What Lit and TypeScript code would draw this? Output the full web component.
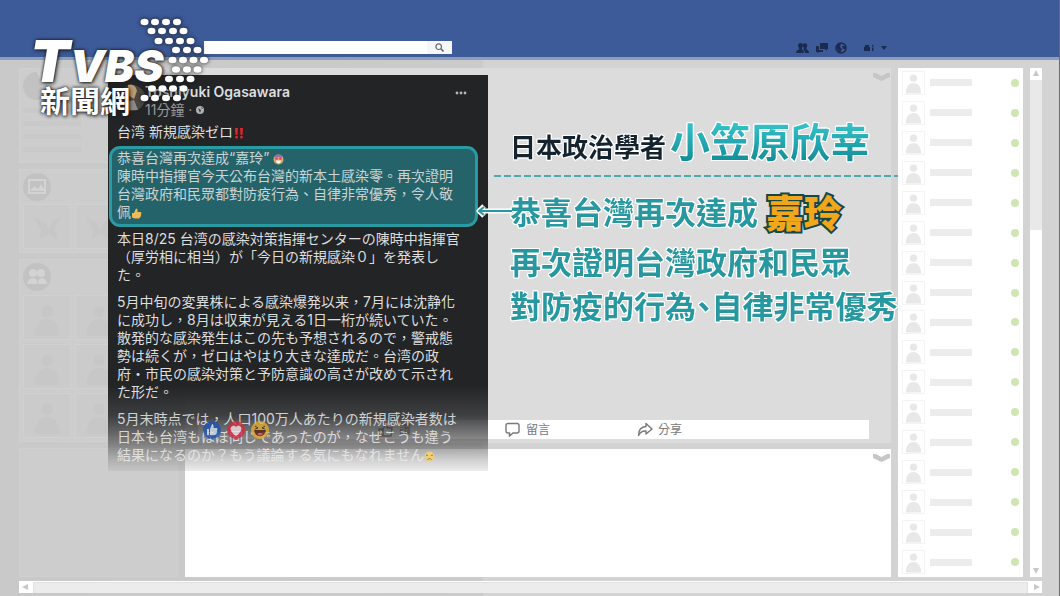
import { LitElement, html, css, svg } from "lit";
import { customElement } from "lit/decorators.js";

const chevron = html`<svg class="chevron" viewBox="0 0 17 8" aria-hidden="true">
  <path d="M0 0 L3 0 L8.5 3 L14 0 L17 0 L17 4 L8.5 8 L0 4Z" fill="currentColor" />
</svg>`;

const person = html`<svg class="person" viewBox="0 0 22 22" aria-hidden="true">
  <circle cx="11" cy="6" r="3.8" fill="currentColor" />
  <path d="M3 22 C3 14 7 11 11 11 S19 14 19 22Z" fill="currentColor" />
</svg>`;

@customElement("broadcast-logo")
class BroadcastLogo extends LitElement {
  static styles = css`
    :host { display: block; position: relative; width: 180px; color: #fff; }
    .word {
      display: flex; align-items: baseline; height: 64px; line-height: 88px;
      font-family: Inter, "Liberation Sans", sans-serif; font-weight: 900; font-style: italic;
      text-shadow: 0 0 3px #111, 1px 1px 4px #222;
    }
    .big { font-size: 58px; }
    .small { font-size: 44px; }
    .sub {
      padding-left: 10px; font: 700 30px/36px "Noto Sans CJK TC", sans-serif;
      text-shadow: 0 0 3px #111, 1px 1px 4px #222;
    }
    .dots { position: absolute; left: 105px; top: 0; width: 80px; height: 90px; overflow: visible; filter: drop-shadow(0 0 2px #111); }
  `;
  render() {
    const rows: [number, number[]][] = [
      [22, [144.5, 155, 166, 177]],
      [31, [151.5, 162, 173, 183.5]],
      [41, [158.5, 169, 180, 190.5]],
      [50, [176, 187, 197.5]],
      [60, [172.5, 183, 193.5, 204]],
      [69.5, [176, 187, 197.5]],
      [79, [169, 180, 190.5]],
      [88.5, [152, 162.5, 173, 183.5]],
      [98, [144.5, 155, 166, 177]],
    ];
    return html`
      <div class="word"><span class="big">T</span><span class="small">VBS</span></div>
      <div class="sub">新聞網</div>
      <svg class="dots" viewBox="135 17 80 90" aria-hidden="true">
        ${rows.map(([y, xs]) => xs.map((x) => svg`<ellipse cx=${x} cy=${y} rx="4" ry="3.2" fill="#fff" />`))}
      </svg>`;
  }
}

@customElement("post-card")
class PostCard extends LitElement {
  static styles = css`
    :host {
      display: block; width: 380px; color: #dcdedf; white-space: nowrap;
      background: linear-gradient(#232426 0, #232426 310px, rgba(36, 37, 39, 0.86) 340px, rgba(60, 60, 62, 0.6) 365px, rgba(120, 120, 120, 0.35) 385px, rgba(160, 160, 160, 0.2));
      font: 400 14px/18px Inter, "Noto Sans CJK TC", sans-serif;
      padding-bottom: 7px;
    }
    .head { display: flex; padding: 8px 21px 0 11px; }
    .avatar { width: 26px; height: 30px; }
    .who { flex: 1; }
    .name { font: 600 14px/18px Inter, sans-serif; margin: 0; }
    .time { display: flex; align-items: center; gap: 4px; color: #96989b; }
    .globe { width: 8px; height: 8px; }
    .more { align-self: flex-start; border: 0; padding: 0; background: none; height: 20px; color: #b4b6b8; }
    .more svg { display: block; width: 12px; height: 4px; }
    p { margin: 0 9px 9px; }
    .lead { margin: 4px 9px 5px; }
    .quote {
      margin: 0 10px 3px 1px; padding: 0 5px 3px; border: 3px solid #2a9aa3; border-radius: 11px;
      background: #24636a; color: #c8d4d5;
    }
    .last { color: rgba(235, 235, 235, 0.86); margin-bottom: 0; }
    .emoji { width: 11px; height: 11px; vertical-align: -2px; }
  `;
  render() {
    return html`
      <header class="head">
        <svg class="avatar" viewBox="0 0 26 30" aria-hidden="true">
          <circle cx="13" cy="15" r="13" fill="#4b463f" /><path d="M9 2 Q16 0 18 8 L15 16 L9 12Z" fill="#b89b73" />
          <path d="M7 19 L15 17 L19 27 L10 27Z" fill="#8d8b88" />
        </svg>
        <div class="who">
          <h2 class="name">Toshiyuki Ogasawara</h2>
          <div class="time"><span>11分鐘 ·</span>
            <svg class="globe" viewBox="0 0 8 8" aria-hidden="true"><circle cx="4" cy="4" r="4" fill="#b0b2b4" /><path d="M2 2 L5 4 L4 7Z M5 1 L7 2 L6 3Z" fill="#3a3b3d" /></svg>
          </div>
        </div>
        <button class="more" aria-label="更多"><svg viewBox="0 0 12 4"><circle cx="2" cy="2" r="1.4" fill="currentColor" /><circle cx="6" cy="2" r="1.4" fill="currentColor" /><circle cx="10" cy="2" r="1.4" fill="currentColor" /></svg></button>
      </header>
      <p class="lead">台湾 新規感染ゼロ<svg class="emoji" viewBox="0 0 11 11" aria-label="‼"><path d="M2 0h3l-.6 7h-1.8z M7 0h3l-.6 7h-1.8z" fill="#e0262c" /><circle cx="3.5" cy="9.2" r="1.4" fill="#e0262c" /><circle cx="8.5" cy="9.2" r="1.4" fill="#e0262c" /></svg></p>
      <p class="quote">恭喜台灣再次達成“嘉玲” <svg class="emoji" viewBox="0 0 11 11" aria-hidden="true"><circle cx="5.5" cy="5.5" r="5" fill="#dba667" /><path d="M1 3 Q5.500 -2 10 3Z" fill="#9a6bb5" /><circle cx="3.500" cy="4.500" r="1.300" fill="#d6455c" /><circle cx="7.500" cy="4.500" r="1.300" fill="#d6455c" /><path d="M3 6.500h5q-.5 3-2.500 3t-2.500-3z" fill="#fff" /></svg><br />陳時中指揮官今天公布台灣的新本土感染零。再次證明<br />台灣政府和民眾都對防疫行為、自律非常優秀，令人敬<br />佩<svg class="emoji" viewBox="0 0 11 11" aria-hidden="true"><path d="M1 5h2L5 .5q2 0 1.500 3.500H10q1 1 0 2 .5 1-.3 2 0 1-.8 1.500-.3 1-1.200 1H4L1 9.500z" fill="#eebb58" /></svg></p>
      <p>本日8/25 台湾の感染対策指揮センターの陳時中指揮官<br />（厚労相に相当）が「今日の新規感染０」を発表し<br />た。</p>
      <p>5月中旬の変異株による感染爆発以来，7月には沈静化<br />に成功し，8月は収束が見える1日一桁が続いていた。<br />散発的な感染発生はこの先も予想されるので，警戒態<br />勢は続くが，ゼロはやはり大きな達成だ。台湾の政<br />府・市民の感染対策と予防意識の高さが改めて示され<br />た形だ。</p>
      <p class="last">5月末時点では，人口100万人あたりの新規感染者数は<br />日本も台湾もほぼ同じであったのが，なぜこうも違う<br />結果になるのか？もう議論する気にもなれません<svg class="emoji" viewBox="0 0 11 11" aria-hidden="true"><circle cx="5.500" cy="5.500" r="5" fill="#edcf76" /><path d="M2 4l2 .5M9 4l-2 .5M3.500 8.500q2-2 4 0" stroke="#a37a3d" fill="none" /></svg></p>`;
  }
}

@customElement("side-rail")
class SideRail extends LitElement {
  static styles = css`
    :host { display: flex; flex-direction: column; gap: 6px; color: #c2c2c2; }
    .box { background: #cdcdcd; border: 1px solid #d0d0d0; padding: 3px; box-sizing: border-box; }
    .info { height: 95px; }
    .badge { display: block; width: 28px; height: 28px; }
    .line { width: 58px; height: 5px; margin-top: 8px; background: #c9c9c9; }
    .tiles { display: grid; grid-template-columns: repeat(3, 48px); gap: 4px; overflow: hidden; }
    .tile { height: 45px; box-sizing: border-box; border: 1px solid #d1d1d1; background: #cbcbcb; color: #c7c7c7; padding: 3px 6px 0; }
    .tile svg { display: block; width: 100%; height: 100%; }
    .friends .badge { margin-bottom: 4px; }
    .rest { flex: 1; }
    .photos .badge { margin-bottom: 3px; }
  `;
  render() {
    const tiles = (n: number) => Array.from({ length: n }, () => html`<div class="tile">${person}</div>`);
    return html`
      <div class="box info">
        <svg class="badge" viewBox="0 0 28 28"><circle cx="14" cy="14" r="14" fill="currentColor" /><path d="M14 0 A14 14 0 0 1 28 14 L18 10Z" fill="#d2d2d2" /></svg>
        ${[1, 2, 3, 4].map(() => html`<div class="line"></div>`)}
      </div>
      <div class="box photos">
        <svg class="badge" viewBox="0 0 28 28"><circle cx="14" cy="14" r="14" fill="currentColor" /><rect x="6" y="7" width="16" height="13" fill="none" stroke="#d3d3d3" stroke-width="2" /><path d="M7 18l4-5 4 3 3-5 4 7z" fill="#d3d3d3" /></svg>
        <div class="tiles">${[1, 2, 3].map(() => html`<div class="tile"><svg viewBox="0 0 30 30"><path d="M3 5l10 5 3 6 4-7 8-4-6 10 2 11-7-6-9 5 2-8z" fill="currentColor" /></svg></div>`)}</div>
      </div>
      <div class="box friends">
        <svg class="badge" viewBox="0 0 28 28"><circle cx="14" cy="14" r="14" fill="currentColor" /><circle cx="10" cy="10" r="4" fill="#d3d3d3" /><circle cx="18" cy="10" r="4" fill="#d3d3d3" /><path d="M4 21q1-6 6-6t4 6zM15 21q0-6 4-6t5 6z" fill="#d3d3d3" /></svg>
        <div class="tiles">${tiles(9)}</div>
      </div>
      <div class="box rest"></div>`;
  }
}

@customElement("app-root")
class AppRoot extends LitElement {
  static styles = css`
    :host {
      display: flex; flex-direction: column; position: relative; min-height: 100vh; box-sizing: border-box; overflow: hidden;
      border-right: 1px solid #6c6c6c;
      background: linear-gradient(90deg, #c9c9c9 0, #cbcbcb 45.600%, #d3d3d3 45.600%);
      font-family: "Noto Sans CJK TC", sans-serif;
    }
    button { border: 0; padding: 0; background: none; color: inherit; display: block; }
    .topbar {
      display: flex; justify-content: space-between; align-items: center; box-sizing: border-box; height: 60px;
      padding: 38px 172px 0 204px; background: #3d5a99; border-bottom: 3px solid #8d9dbd;
    }
    .search { display: flex; width: 248px; height: 13px; background: #fff; }
    .search input { flex: 1; min-width: 0; border: 0; padding: 0 4px; background: none; font-size: 10px; outline: 0; }
    .search button { width: 25px; background: #f4f6fa; color: #666; }
    .search svg { display: block; width: 9px; height: 9px; margin: 0 auto; }
    .tools { display: flex; align-items: center; gap: 7px; color: #1a2a50; }
    .tools svg { display: block; height: 12px; }
    .tools .gap { margin-left: 10px; }
    .main { flex: 1; display: flex; padding: 8px 17px 4px 19px; gap: 7px; }
    .rail { width: 159px; flex: none; }
    .center { flex: 1; min-width: 0; display: flex; flex-direction: column; gap: 6px; }
    .panel { background: #dcdcdc; display: flex; flex-direction: column; height: 375px; }
    .chevron { display: block; width: 17px; height: 8px; align-self: flex-end; flex: none; margin-top: 5px; margin-right: 1px; color: #c6c6c6; }
    .blank { flex: 1; background: #fff; display: flex; flex-direction: column; }
    .story { flex: 1; padding: 25px 0 0 325px; white-space: nowrap; color: #2797a0; font-weight: 700; font-size: 31px; line-height: 44px; }
    .title { display: flex; align-items: baseline; margin: 0; height: 48px; line-height: 48px; }
    .role { font-size: 26px; color: #14232e; }
    .scholar {
      font-size: 40px; margin-left: 4px; color: transparent; background: linear-gradient(#35c3cb 20%, #148e98 85%);
      -webkit-background-clip: text; background-clip: text;
    }
    .halo { filter: drop-shadow(1px 0 #fff) drop-shadow(-1px 0 #fff) drop-shadow(0 1px #fff) drop-shadow(0 -1px #fff); }
    .rule { height: 2px; margin: 21px -7px 12px -16px; background: repeating-linear-gradient(90deg, #4fa9b0 0, #4fa9b0 7px, transparent 7px, transparent 10px); }
    .say { display: flex; margin: 0; height: 44px; }
    .say + .say { margin-top: 6px; }
    .say + .say + .say { margin-top: 0; }
    .half { font-feature-settings: "halt"; }
    .nick {
      font-size: 38px; font-weight: 900; color: #f2a71b; margin-left: 8px;
      -webkit-text-stroke: 4px #14474a; paint-order: stroke fill;
    }
    .actions { display: flex; align-items: center; box-sizing: border-box; height: 19px; margin: 0 22px 4px 13px; background: #fff; color: #77797d; }
    .reacts { display: flex; gap: 6px; width: 180px; padding-left: 5px; box-sizing: border-box; position: relative; z-index: 3; opacity: 0.8; }
    .reacts svg { width: 18px; height: 18px; }
    .act { display: flex; align-items: center; gap: 5px; font: 400 12px/18px "Liberation Serif", "Noto Sans CJK TC", serif; width: 127px; }
    .act.share { margin-left: 5px; }
    .act svg { width: 16px; height: 15px; }
    .contacts { width: 125px; box-sizing: border-box; flex: none; background: #fff; display: grid; grid-auto-rows: 1fr; margin: 0; padding: 0 4px; list-style: none; position: relative; }
    .contact { display: flex; align-items: center; }
    .pic { width: 21px; height: 22px; border: 1px solid #f4f4f4; color: #e8e8e8; }
    .pic svg { display: block; width: 21px; height: 22px; }
    .bar { width: 42px; height: 7px; margin-left: 5px; background: #ececec; }
    .dot { width: 8px; height: 8px; border-radius: 50%; background: #cfe6b4; margin-left: auto; }
    .vscroll { width: 12px; flex: none; background: #fff; display: flex; flex-direction: column; color: #c8c8c8; }
    .vscroll svg, .hscroll svg { display: block; width: 12px; height: 12px; }
    .vthumb { height: 150px; background: #e9e9e9; }
    .vfill { flex: 1; }
    .hscroll { display: flex; margin: 0 17px 3px 19px; background: #fff; color: #c8c8c8; height: 12px; }
    .hthumb { flex: 1; margin: 1px 2px 0; border: 1px solid #e0e0e0; border-bottom: 0; background: #ececec; }
    .post { position: absolute; left: 108px; top: 75px; z-index: 2; }
    .logo { position: absolute; left: 30px; top: 17px; z-index: 4; }
    .arrow { position: absolute; left: 476px; top: 203px; width: 36px; height: 16px; z-index: 4; }
  `;
  render() {
    return html`
      <header class="topbar">
        <form class="search" role="search">
          <input type="text" aria-label="搜尋" />
          <button type="button" aria-label="搜尋"><svg viewBox="0 0 9 9"><circle cx="3.700" cy="3.700" r="2.800" fill="none" stroke="currentColor" stroke-width="1.200" /><path d="M5.800 5.800L8.500 8.500" stroke="currentColor" stroke-width="1.600" /></svg></button>
        </form>
        <nav class="tools">
          <button aria-label="朋友"><svg width="13" viewBox="0 0 13 12"><circle cx="4.500" cy="3.500" r="2.500" fill="currentColor" /><circle cx="9" cy="3.500" r="2.300" fill="currentColor" /><path d="M0 11q0-3 3-3.500V5h3v2.500q2 .5 2 3.500zM8 5h2.500v2.500Q13 8 13 11H9q0-2-1.500-3z" fill="currentColor" /></svg></button>
          <button aria-label="訊息"><svg width="12" viewBox="0 0 12 12"><path d="M4 1h8v6h-1v2L9 7H4z M0 4h3v4h4v2H3L1.500 11.500V10H0z" fill="currentColor" /></svg></button>
          <button aria-label="通知"><svg width="12" viewBox="0 0 12 12"><circle cx="6" cy="6" r="5" fill="none" stroke="currentColor" stroke-width="1.500" /><path d="M2 2l4-1-1 4 2 2-2 4-3-4zM7 4l3 0 0 3-2 0z" fill="currentColor" /></svg></button>
          <button class="gap" aria-label="隱私"><svg width="10" viewBox="0 0 10 12"><path d="M0 5h6v4H0z M1 5V3h4v2z M8 3h1.500v1.500H8z M8 5.500h1.500V9H8z" fill="currentColor" /></svg></button>
          <button aria-label="選單"><svg width="6" viewBox="0 0 6 12"><path d="M0 4h6L3 8z" fill="currentColor" /></svg></button>
        </nav>
      </header>
      <main class="main">
        <side-rail class="rail"></side-rail>
        <div class="center">
          <section class="panel">
            ${chevron}
            <div class="story">
              <h1 class="title"><span class="role halo">日本政治學者</span><span class="halo"><span class="scholar">小笠原欣幸</span></span></h1>
              <div class="rule"></div>
              <p class="say"><span class="halo">恭喜台灣再次達成</span><span class="nick">嘉玲</span></p>
              <p class="say"><span class="halo">再次證明台灣政府和民眾</span></p>
              <p class="say"><span class="halo">對防疫的行為<span class="half">、</span>自律非常優秀</span></p>
            </div>
            <div class="actions">
              <div class="reacts">
                <svg viewBox="0 0 18 18"><circle cx="9" cy="9" r="9" fill="#1d55b5" /><path d="M4 8h2v6H4zM7 8l2-5q2 0 1.500 4H14q1 1 0 2.500 0 4-2 4.500H7z" fill="#d5deee" /></svg>
                <svg viewBox="0 0 18 18"><circle cx="9" cy="9" r="9" fill="#d32a42" /><path d="M9 15Q2 10 4 6q3-3 5 0 2-3 5 0 2 4-5 9z" fill="#f1dfe2" /></svg>
                <svg viewBox="0 0 18 18"><circle cx="9" cy="9" r="9" fill="#e0ad35" /><path d="M4 5l3 2-3 1M14 5l-3 2 3 1" stroke="#46320c" fill="none" /><path d="M3 9h12q-1 6-6 6T3 9z" fill="#59220e" /><path d="M6 13q3-2 6 0-3 3-6 0z" fill="#e84a54" /></svg>
              </div>
              <button class="act"><svg viewBox="0 0 16 15"><path d="M1 14V7h3v7zM5 7l3-5q2 0 1 4h5l-1 8H5z" fill="none" stroke="currentColor" stroke-width="1.300" /></svg>讚</button>
              <button class="act"><svg viewBox="0 0 16 15"><path d="M3 1.500h9q2 0 2 2V9q0 2-2 2H8l-3.500 3V11H3q-2 0-2-2V3.500q0-2 2-2z" fill="none" stroke="currentColor" stroke-width="1.400" /></svg>留言</button>
              <button class="act share"><svg viewBox="0 0 16 15"><path d="M1.500 13.500Q1.500 5 9 4.500V1.500L15 7l-6 5V9Q4 8.500 1.500 13.500z" fill="none" stroke="currentColor" stroke-width="1.400" stroke-linejoin="round" /></svg>分享</button>
            </div>
          </section>
          <section class="blank">${chevron}</section>
        </div>
        <ul class="contacts">
          ${Array.from({ length: 17 }, () => html`<li class="contact"><span class="pic">${person}</span><span class="bar"></span><span class="dot"></span></li>`)}
        </ul>
        <div class="vscroll">
          <svg viewBox="0 0 12 12"><path d="M6 2l3 6H3z" fill="currentColor" /></svg>
          <div class="vthumb"></div><div class="vfill"></div>
          <svg viewBox="0 0 12 12"><path d="M6 9L3 3h6z" fill="currentColor" /></svg>
        </div>
      </main>
      <div class="hscroll">
        <svg viewBox="0 0 12 12"><path d="M3 6l6-3v6z" fill="currentColor" /></svg>
        <div class="hthumb"></div>
        <svg viewBox="0 0 12 12"><path d="M10 6L4 3v6z" fill="currentColor" /></svg>
      </div>
      <post-card class="post"></post-card>
      <svg class="arrow" viewBox="0 0 36 16" aria-hidden="true">
        <path d="M8 3L3 8l5 5M3 8h33" fill="none" stroke="#fff" stroke-width="5" stroke-linejoin="round" />
        <path d="M8 4L3 8l5 4M3 8h33" fill="none" stroke="#2797a0" stroke-width="2" />
      </svg>
      <broadcast-logo class="logo"></broadcast-logo>`;
  }
}
